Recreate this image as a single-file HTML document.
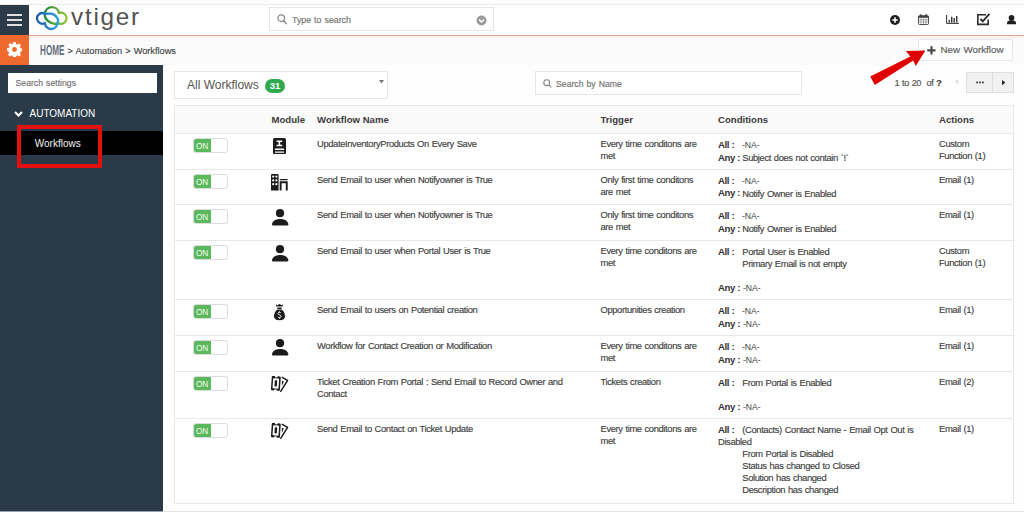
<!DOCTYPE html>
<html><head><meta charset="utf-8">
<style>
*{box-sizing:border-box;margin:0;padding:0}
html,body{width:1024px;height:512px;overflow:hidden;background:#fefefe;font-family:"Liberation Sans",sans-serif;color:#444}
body{position:relative}
.abs{position:absolute}
#topstrip{left:0;top:0;width:1024px;height:5px;background:#fdfdfd;border-bottom:1px solid #eaeaea}
#header{left:0;top:5px;width:1024px;height:30px;background:#fff}
#orangeline{left:29px;top:35px;width:995px;height:1px;background:#e2a08a}
#crumbbar{left:29px;top:36px;width:995px;height:28.5px;background:#fbfbfb}
#shadow{left:29px;top:36px;width:995px;height:5px;background:linear-gradient(#fdf3ef,#fbfbfb)}
#ham{left:0;top:5px;width:29px;height:30px;background:#2b3a48}
#gear{left:0;top:35px;width:29px;height:30px;background:#ef6a2f}
#sidebar{left:0;top:65px;width:163px;height:446px;background:#2b3a48}
#bottomline{left:0;top:511px;width:1024px;height:1px;background:linear-gradient(90deg,#9aa3aa 163px,#e6e6e6 163px)}
.tx{position:absolute;font-size:9.4px;line-height:12px;white-space:nowrap;color:#404040;letter-spacing:-0.37px;word-spacing:0.6px;-webkit-text-stroke:0.15px #404040}
.na{position:absolute;font-size:8.6px;line-height:12px;white-space:nowrap;color:#404040}
.lab{position:absolute;font-size:9.6px;line-height:12px;white-space:nowrap;font-weight:bold;color:#333;letter-spacing:-0.38px}
.th{position:absolute;font-size:9.6px;line-height:12px;white-space:nowrap;font-weight:bold;color:#3a3a3a;top:113.6px}
.hl{position:absolute;left:174px;width:840px;height:1px;background:#e8e8e8}
.tog{position:absolute;left:193px;width:35px;height:15px;border:1px solid #dcdcdc;border-radius:3px;background:#fff;overflow:hidden}
.tog .on{position:absolute;left:-1px;top:-1px;width:18px;height:15px;background:#5cb85c;border-radius:3px 0 0 3px;color:#f4fff4;font-size:8.2px;line-height:15px;padding-left:2.9px;padding-top:1px}
.ic{position:absolute;line-height:0}
.ic-doc{left:273px}
.ic-building{left:271px}
.ic-person{left:271px}
.ic-bag{left:273px}
.ic-ticket{left:271px}
</style></head><body>
<div class="abs" id="topstrip"></div>
<div class="abs" id="header"></div>
<div class="abs" id="orangeline"></div>
<div class="abs" id="crumbbar"></div>
<div class="abs" id="shadow"></div>
<div class="abs" id="ham">
  <div class="abs" style="left:7px;top:9px;width:15px;height:2px;background:#dde1e5"></div>
  <div class="abs" style="left:7px;top:14px;width:15px;height:2px;background:#dde1e5"></div>
  <div class="abs" style="left:7px;top:19px;width:15px;height:2px;background:#dde1e5"></div>
</div>
<div class="abs" id="gear">
  <svg class="abs" style="left:6.6px;top:6.6px" width="15" height="15" viewBox="0 0 16 16">
    <path fill="#fff" fill-rule="evenodd" d="M6.6 0h2.8l.4 2.2 1.3.6 1.9-1.3 2 2-1.3 1.9.6 1.3 2.2.4v2.8l-2.2.4-.6 1.3 1.3 1.9-2 2-1.9-1.3-1.3.6-.4 2.2H6.6l-.4-2.2-1.3-.6-1.9 1.3-2-2 1.3-1.9-.6-1.3L0 9.4V6.6l2.2-.4.6-1.3-1.3-1.9 2-2 1.9 1.3 1.3-.6zM8 5.4A2.6 2.6 0 1 0 8 10.6 2.6 2.6 0 1 0 8 5.4z"/>
  </svg>
</div>
<div class="abs" id="sidebar"></div>
<div class="abs" id="bottomline"></div>

<!-- logo -->
<svg class="abs" style="left:0;top:0" width="80" height="40" viewBox="0 0 80 40">
  <defs>
    <linearGradient id="gg" x1="44" y1="0" x2="68" y2="0" gradientUnits="userSpaceOnUse"><stop offset="0" stop-color="#1e8a3e"/><stop offset="1" stop-color="#9cc63c"/></linearGradient>
    <linearGradient id="bg" x1="36" y1="0" x2="60" y2="0" gradientUnits="userSpaceOnUse"><stop offset="0" stop-color="#1c5aa8"/><stop offset="1" stop-color="#2ca8e0"/></linearGradient>
  </defs>
  <g fill="none" stroke-width="2.3" stroke-linejoin="round">
    <path stroke="url(#gg)" d="M44.8 13.5 A7.2 7.2 0 0 1 59 13 A5.6 5.6 0 1 1 59 23.5 C55.5 24.5 51 23.5 48 21 C46 19.3 44.5 17 44.8 13.5 Z"/>
    <path stroke="url(#bg)" d="M44.9 13.9 A5.2 5.2 0 1 0 44.9 22.9 A6.3 6.3 0 0 0 57.5 22.5 C59.3 21 57 14.5 51 13.7 C48 13.4 46.2 13.6 44.9 13.9 Z"/>
  </g>
</svg>
<div class="abs" style="left:71px;top:2.2px;font-size:24.3px;line-height:30px;color:#525252;letter-spacing:1.75px;white-space:nowrap">vtiger</div>

<!-- global search -->
<div class="abs" style="left:269px;top:7px;width:225px;height:24px;border:1px solid #e6e6e6;background:#fff"></div>
<svg class="abs" style="left:277px;top:14px" width="10" height="11" viewBox="0 0 10 11"><circle cx="4.2" cy="4.2" r="3.3" fill="none" stroke="#8a8a8a" stroke-width="1.3"/><path d="M6.6 6.8L9.2 9.6" stroke="#8a8a8a" stroke-width="1.5" stroke-linecap="round"/></svg>
<div class="tx" style="letter-spacing:0;left:292px;top:14px;font-size:8.8px;color:#888">Type to search</div>
<svg class="abs" style="left:475.5px;top:14.5px" width="11" height="11" viewBox="0 0 11 11"><circle cx="5.5" cy="5.5" r="5" fill="#9a9a9a"/><path d="M3 4.5L5.5 7 8 4.5" fill="none" stroke="#fff" stroke-width="1.5"/></svg>

<!-- right header icons -->
<svg class="abs" style="left:890px;top:14.5px" width="10" height="10" viewBox="0 0 10 10"><circle cx="5" cy="5" r="5" fill="#1f1f1f"/><path d="M5 2.3v5.4M2.3 5h5.4" stroke="#fff" stroke-width="1.6"/></svg>
<svg class="abs" style="left:918px;top:14px" width="11" height="11" viewBox="0 0 11 11"><rect x="0.5" y="1.8" width="10" height="8.7" rx="1" fill="none" stroke="#444" stroke-width="1"/><rect x="0.5" y="1.8" width="10" height="2" fill="#444"/><circle cx="2.8" cy="1.4" r="1.1" fill="#444"/><circle cx="8.2" cy="1.4" r="1.1" fill="#444"/><g stroke="#888" stroke-width="0.7"><path d="M0.5 5.8h10M0.5 8h10M3 4v6.5M5.5 4v6.5M8 4v6.5"/></g></svg>
<svg class="abs" style="left:946px;top:15px" width="13" height="9" viewBox="0 0 13 9"><path d="M0.6 0v8.4h12.4" fill="none" stroke="#333" stroke-width="1"/><rect x="2.5" y="5" width="1.4" height="2.6" fill="#333"/><rect x="5" y="1.8" width="1.4" height="5.8" fill="#333"/><rect x="7.5" y="3" width="1.4" height="4.6" fill="#333"/><rect x="10" y="1" width="1.4" height="6.6" fill="#333"/></svg>
<svg class="abs" style="left:977px;top:13px" width="13" height="13" viewBox="0 0 13 13"><path d="M11.2 6.4V11.4H0.8V1.8H9" fill="none" stroke="#2a2a2a" stroke-width="1.6"/><path d="M3.4 5.8l2.4 2.6L12.4 0.8" fill="none" stroke="#2a2a2a" stroke-width="1.9"/></svg>
<svg class="abs" style="left:1006.8px;top:14.6px" width="9" height="10" viewBox="0 0 9 10"><circle cx="4.5" cy="2.9" r="2.8" fill="#1f1f1f"/><path d="M0 9.3V8C0 6.3 1.5 5.3 4.5 5.3S9 6.3 9 8V9.3z" fill="#1f1f1f"/></svg>

<!-- breadcrumb -->
<div class="abs" style="left:40px;top:43px;font-size:13.8px;line-height:16px;font-weight:bold;color:#637080;transform:scaleX(0.59);transform-origin:0 0;white-space:nowrap">HOME</div>
<div class="tx" style="letter-spacing:0;left:67.5px;top:44.5px;font-size:9.2px;color:#444">&gt; Automation &gt; Workflows</div>

<!-- new workflow button -->
<div class="abs" style="left:918px;top:39px;width:94.5px;height:22px;border:1px solid #e6e6e6;background:#fff;border-radius:2px"></div>
<svg class="abs" style="left:927px;top:45.5px" width="9" height="9" viewBox="0 0 9 9"><path d="M4.5 0.3v8.2M0.3 4.4h8.2" stroke="#4a4a4a" stroke-width="2.2"/></svg>
<div class="tx" style="letter-spacing:0;left:940.5px;top:44px;font-size:9.8px;color:#666">New Workflow</div>

<!-- red arrow -->
<svg class="abs" style="left:860px;top:40px" width="80" height="50" viewBox="860 40 80 50">
  <path fill="#e00000" d="M870.2 76.6 L910.3 56.6 L905.9 51 L925.4 50.6 L915.7 65.9 L913.3 60.6 L874.8 84.9 Z"/>
</svg>

<!-- sidebar content -->
<div class="abs" style="left:8px;top:73px;width:149px;height:20px;background:#fff"></div>
<div class="tx" style="letter-spacing:0;left:15.5px;top:77px;font-size:8.7px;color:#888">Search settings</div>
<svg class="abs" style="left:14px;top:110.5px" width="9" height="6" viewBox="0 0 9 6"><path d="M1 1l3.5 3.5L8 1" fill="none" stroke="#fff" stroke-width="2"/></svg>
<div class="abs" style="left:29.5px;top:108px;font-size:10px;line-height:12px;color:#fff;white-space:nowrap">AUTOMATION</div>
<div class="abs" style="left:0;top:130.5px;width:163px;height:24.5px;background:#000"></div>
<div class="abs" style="left:34.8px;top:138px;font-size:10px;line-height:12px;color:#f2f2f2;white-space:nowrap">Workflows</div>
<div class="abs" style="left:16.5px;top:124.5px;width:85.5px;height:43.5px;border:4.5px solid #e31010"></div>

<!-- list toolbar -->
<div class="abs" style="left:174px;top:71px;width:213.5px;height:27.5px;border:1px solid #e6e6e6;background:#fff"></div>
<div class="abs" style="left:187px;top:78px;font-size:12px;line-height:14px;color:#555;white-space:nowrap">All Workflows</div>
<div class="abs" style="left:265px;top:78.5px;width:20px;height:14.5px;border-radius:7px;background:#2eaa4c;color:#fff;font-size:9.5px;font-weight:bold;line-height:14.5px;text-align:center">31</div>
<svg class="abs" style="left:378.5px;top:80px" width="5" height="4" viewBox="0 0 5 4"><path d="M0 0h5L2.5 3.6z" fill="#777"/></svg>

<div class="abs" style="left:535px;top:71.3px;width:266.5px;height:24px;border:1px solid #e6e6e6;background:#fff"></div>
<svg class="abs" style="left:542.5px;top:79px" width="9" height="9" viewBox="0 0 9 9"><circle cx="3.7" cy="3.7" r="2.9" fill="none" stroke="#888" stroke-width="1.1"/><path d="M5.8 5.9L8.3 8.4" stroke="#888" stroke-width="1.2"/></svg>
<div class="tx" style="letter-spacing:0;left:556px;top:77.5px;font-size:8.7px;color:#888">Search by Name</div>

<!-- pagination -->
<div class="tx" style="left:894.5px;top:76.5px;font-size:9.1px;letter-spacing:-0.35px;color:#555">1 to 20&nbsp; of <b style="color:#333">?</b></div>
<svg class="abs" style="left:955px;top:79px" width="4" height="6" viewBox="0 0 4 6"><path d="M3.4 0v5.2L0 2.6z" fill="#dadada"/></svg>
<div class="abs" style="left:966px;top:71.5px;width:26.5px;height:21px;border:1px solid #dedede;background:#f1f1f1"></div>
<svg class="abs" style="left:976px;top:80.5px" width="8" height="3" viewBox="0 0 8 3"><rect x="0.2" y="0.6" width="1.7" height="1.7" fill="#333"/><rect x="3.1" y="0.6" width="1.7" height="1.7" fill="#333"/><rect x="6" y="0.6" width="1.7" height="1.7" fill="#333"/></svg>
<div class="abs" style="left:992px;top:71.5px;width:22px;height:21px;border:1px solid #dedede;background:#f1f1f1"></div>
<svg class="abs" style="left:1001.5px;top:79.5px" width="4" height="6" viewBox="0 0 4 6"><path d="M0 0v5.2L3.4 2.6z" fill="#222"/></svg>

<!-- table -->
<div class="abs" style="left:174px;top:105.3px;width:840px;height:398.7px;border:1px solid #e8e8e8;background:#fff"></div>
<div class="abs" style="left:175px;top:106.3px;width:838px;height:27px;background:#fafafa"></div>
<div class="th" style="left:271.5px">Module</div>
<div class="th" style="left:317px">Workflow Name</div>
<div class="th" style="left:600.5px">Trigger</div>
<div class="th" style="left:718px">Conditions</div>
<div class="th" style="left:939px">Actions</div>
<div class="hl" style="top:133.0px"></div>
<div class="tog" style="top:138.3px"><div class="on">ON</div></div>
<div class="ic" style="left:273.1px;top:137.7px"><svg width="13" height="16.5" viewBox="0 0 13 16.5"><rect x="0" y="0" width="13" height="16.3" rx="1.6" fill="#1c1c1c"/><path fill="#fff" d="M3.6 2.4h5.6v1.5H7.4c-.4.6-.4 2.2 0 2.8h1.8v1.5H3.6V6.7h1.8c.4-.6.4-2.2 0-2.8H3.6z"/><rect x="1.9" y="10.5" width="9.2" height="1.4" rx=".5" fill="#fff"/><rect x="1.9" y="13.4" width="9.2" height="1.4" rx=".5" fill="#fff"/></svg></div>
<div class="tx" style="left:317px;top:138.20px">UpdateInventoryProducts On Every Save</div>
<div class="tx" style="left:600.5px;top:138.20px">Every time conditons are</div>
<div class="tx" style="left:600.5px;top:150.20px">met</div>
<div class="lab" style="left:718px;top:139.10px">All :</div>
<div class="na" style="left:742px;top:139.10px">-NA-</div>
<div class="lab" style="left:718px;top:151.80px">Any :</div>
<div class="tx" style="left:742.3px;top:152.00px">Subject does not contain `!`</div>
<div class="tx" style="left:939px;top:138.20px">Custom</div>
<div class="tx" style="left:939px;top:150.20px">Function (1)</div>
<div class="hl" style="top:168.5px"></div>
<div class="tog" style="top:173.8px"><div class="on">ON</div></div>
<div class="ic" style="left:271.2px;top:174.0px"><svg width="17" height="17" viewBox="0 0 17 17"><path d="M0 1.3C0 .5.5 0 1.3 0h5C7.1 0 7.6.5 7.6 1.3V16.4H0z" fill="#1c1c1c"/><g fill="#fff"><circle cx="2.2" cy="2.6" r="1.1"/><circle cx="5.4" cy="2.6" r="1.1"/><circle cx="2.2" cy="6.4" r="1.1"/><circle cx="5.4" cy="6.4" r="1.1"/><circle cx="2.2" cy="10.2" r="1.1"/><circle cx="5.4" cy="10.2" r="1.1"/></g><rect x="8.7" y="4.9" width="8" height="1.4" rx=".6" fill="#1c1c1c"/><path d="M8.7 7.2h8v9.2h-1.9V9.3h-4.2v7.1H8.7z" fill="#1c1c1c"/></svg></div>
<div class="tx" style="left:317px;top:173.70px">Send Email to user when Notifyowner is True</div>
<div class="tx" style="left:600.5px;top:173.70px">Only first time conditons</div>
<div class="tx" style="left:600.5px;top:185.70px">are met</div>
<div class="lab" style="left:718px;top:174.60px">All :</div>
<div class="na" style="left:742px;top:174.60px">-NA-</div>
<div class="lab" style="left:718px;top:187.30px">Any :</div>
<div class="tx" style="left:742.3px;top:187.50px">Notify Owner is Enabled</div>
<div class="tx" style="left:939px;top:173.70px">Email (1)</div>
<div class="hl" style="top:204.0px"></div>
<div class="tog" style="top:209.3px"><div class="on">ON</div></div>
<div class="ic" style="left:271.5px;top:208.6px"><svg width="17" height="17" viewBox="0 0 17 17"><circle cx="8" cy="4.15" r="4.1" fill="#1c1c1c"/><path d="M0 15.4C0.2 12 3.6 9.9 8.2 9.9S16.2 12 16.4 15.4C16.5 16.1 16 16.4 15.4 16.4H1C.4 16.4-.1 16.1 0 15.4z" fill="#1c1c1c"/></svg></div>
<div class="tx" style="left:317px;top:209.20px">Send Email to user when Notifyowner is True</div>
<div class="tx" style="left:600.5px;top:209.20px">Only first time conditons</div>
<div class="tx" style="left:600.5px;top:221.20px">are met</div>
<div class="lab" style="left:718px;top:210.10px">All :</div>
<div class="na" style="left:742px;top:210.10px">-NA-</div>
<div class="lab" style="left:718px;top:222.80px">Any :</div>
<div class="tx" style="left:742.3px;top:223.00px">Notify Owner is Enabled</div>
<div class="tx" style="left:939px;top:209.20px">Email (1)</div>
<div class="hl" style="top:240.0px"></div>
<div class="tog" style="top:245.3px"><div class="on">ON</div></div>
<div class="ic" style="left:271.5px;top:244.6px"><svg width="17" height="17" viewBox="0 0 17 17"><circle cx="8" cy="4.15" r="4.1" fill="#1c1c1c"/><path d="M0 15.4C0.2 12 3.6 9.9 8.2 9.9S16.2 12 16.4 15.4C16.5 16.1 16 16.4 15.4 16.4H1C.4 16.4-.1 16.1 0 15.4z" fill="#1c1c1c"/></svg></div>
<div class="tx" style="left:317px;top:245.20px">Send Email to user when Portal User is True</div>
<div class="tx" style="left:600.5px;top:245.20px">Every time conditons are</div>
<div class="tx" style="left:600.5px;top:257.20px">met</div>
<div class="lab" style="left:718px;top:246.10px">All :</div>
<div class="tx" style="left:742.3px;top:246.30px">Portal User is Enabled</div>
<div class="tx" style="left:742.3px;top:258.30px">Primary Email is not empty</div>
<div class="lab" style="left:718px;top:282.10px">Any :</div>
<div class="na" style="left:743px;top:282.10px">-NA-</div>
<div class="tx" style="left:939px;top:245.20px">Custom</div>
<div class="tx" style="left:939px;top:257.20px">Function (1)</div>
<div class="hl" style="top:298.9px"></div>
<div class="tog" style="top:304.2px"><div class="on">ON</div></div>
<div class="ic" style="left:274.2px;top:304.0px"><svg width="11" height="17" viewBox="0 0 11 17"><path d="M1.8 0.2L3.3 1.2 5.5 0 7.7 1.2 9.2 0.2 8.6 2.6H2.4z" fill="#1c1c1c"/><rect x="3.2" y="3.6" width="4.6" height="1.3" rx=".6" fill="#1c1c1c"/><path d="M3.4 5.6h4.2C9.6 6.8 11 9.6 11 12.3 11 15 9 16.2 5.5 16.2S0 15 0 12.3C0 9.6 1.4 6.8 3.4 5.6z" fill="#1c1c1c"/><path d="M6.9 8.9C6.6 8.5 6.1 8.3 5.5 8.3 4.6 8.3 4 8.8 4 9.5 4 11.2 7.1 10.6 7.1 12.4 7.1 13.2 6.4 13.7 5.5 13.7 4.8 13.7 4.2 13.4 3.9 12.9M5.5 7.4v1M5.5 13.6v1" fill="none" stroke="#fff" stroke-width="1"/></svg></div>
<div class="tx" style="left:317px;top:304.10px">Send Email to users on Potential creation</div>
<div class="tx" style="left:600.5px;top:304.10px">Opportunities creation</div>
<div class="lab" style="left:718px;top:305.00px">All :</div>
<div class="na" style="left:742px;top:305.00px">-NA-</div>
<div class="lab" style="left:718px;top:317.70px">Any :</div>
<div class="na" style="left:743px;top:317.70px">-NA-</div>
<div class="tx" style="left:939px;top:304.10px">Email (1)</div>
<div class="hl" style="top:334.7px"></div>
<div class="tog" style="top:340.0px"><div class="on">ON</div></div>
<div class="ic" style="left:271.5px;top:339.3px"><svg width="17" height="17" viewBox="0 0 17 17"><circle cx="8" cy="4.15" r="4.1" fill="#1c1c1c"/><path d="M0 15.4C0.2 12 3.6 9.9 8.2 9.9S16.2 12 16.4 15.4C16.5 16.1 16 16.4 15.4 16.4H1C.4 16.4-.1 16.1 0 15.4z" fill="#1c1c1c"/></svg></div>
<div class="tx" style="left:317px;top:339.90px">Workflow for Contact Creation or Modification</div>
<div class="tx" style="left:600.5px;top:339.90px">Every time conditons are</div>
<div class="tx" style="left:600.5px;top:351.90px">met</div>
<div class="lab" style="left:718px;top:340.80px">All :</div>
<div class="na" style="left:742px;top:340.80px">-NA-</div>
<div class="lab" style="left:718px;top:353.50px">Any :</div>
<div class="na" style="left:743px;top:353.50px">-NA-</div>
<div class="tx" style="left:939px;top:339.90px">Email (1)</div>
<div class="hl" style="top:370.5px"></div>
<div class="tog" style="top:375.8px"><div class="on">ON</div></div>
<div class="ic" style="left:271.3px;top:375.8px"><svg width="18" height="17" viewBox="0 0 18 17"><g transform="rotate(4 5 8)"><path fill="#1c1c1c" d="M1.2 0.2H3.4A1.4 1.4 0 0 0 6.2 0.2H8.4A1 1 0 0 1 9.3 1.2V13.6A1 1 0 0 1 8.4 14.6H6.2A1.4 1.4 0 0 0 3.4 14.6H1.2A1 1 0 0 1 .3 13.6V1.2A1 1 0 0 1 1.2 0.2z"/><rect x="1.8" y="2.3" width="6" height="10.2" rx=".8" fill="#fff"/><rect x="3.6" y="4.2" width="2.4" height="6.4" rx=".8" fill="#1c1c1c"/></g><path d="M10.8 1.2L16.6 4.4 9.4 15.8" fill="none" stroke="#1c1c1c" stroke-width="1.5" stroke-linejoin="round"/><path d="M10.9 4.6L12.8 5.7 10.9 9.8z" fill="#1c1c1c"/></svg></div>
<div class="tx" style="left:317px;top:375.70px">Ticket Creation From Portal : Send Email to Record Owner and</div>
<div class="tx" style="left:317px;top:387.70px">Contact</div>
<div class="tx" style="left:600.5px;top:375.70px">Tickets creation</div>
<div class="lab" style="left:718px;top:376.60px">All :</div>
<div class="tx" style="left:742.3px;top:376.80px">From Portal is Enabled</div>
<div class="lab" style="left:718px;top:400.60px">Any :</div>
<div class="na" style="left:743px;top:400.60px">-NA-</div>
<div class="tx" style="left:939px;top:375.70px">Email (2)</div>
<div class="hl" style="top:417.7px"></div>
<div class="tog" style="top:423.0px"><div class="on">ON</div></div>
<div class="ic" style="left:271.3px;top:423.0px"><svg width="18" height="17" viewBox="0 0 18 17"><g transform="rotate(4 5 8)"><path fill="#1c1c1c" d="M1.2 0.2H3.4A1.4 1.4 0 0 0 6.2 0.2H8.4A1 1 0 0 1 9.3 1.2V13.6A1 1 0 0 1 8.4 14.6H6.2A1.4 1.4 0 0 0 3.4 14.6H1.2A1 1 0 0 1 .3 13.6V1.2A1 1 0 0 1 1.2 0.2z"/><rect x="1.8" y="2.3" width="6" height="10.2" rx=".8" fill="#fff"/><rect x="3.6" y="4.2" width="2.4" height="6.4" rx=".8" fill="#1c1c1c"/></g><path d="M10.8 1.2L16.6 4.4 9.4 15.8" fill="none" stroke="#1c1c1c" stroke-width="1.5" stroke-linejoin="round"/><path d="M10.9 4.6L12.8 5.7 10.9 9.8z" fill="#1c1c1c"/></svg></div>
<div class="tx" style="left:317px;top:422.90px">Send Email to Contact on Ticket Update</div>
<div class="tx" style="left:600.5px;top:422.90px">Every time conditons are</div>
<div class="tx" style="left:600.5px;top:434.90px">met</div>
<div class="lab" style="left:718px;top:423.80px">All :</div>
<div class="tx" style="left:742.3px;top:424.00px">(Contacts) Contact Name - Email Opt Out is</div>
<div class="tx" style="left:718px;top:436.00px">Disabled</div>
<div class="tx" style="left:742.3px;top:448.00px">From Portal is Disabled</div>
<div class="tx" style="left:742.3px;top:460.00px">Status has changed to Closed</div>
<div class="tx" style="left:742.3px;top:472.00px">Solution has changed</div>
<div class="tx" style="left:742.3px;top:484.00px">Description has changed</div>
<div class="tx" style="left:939px;top:422.90px">Email (1)</div>
</body></html>
